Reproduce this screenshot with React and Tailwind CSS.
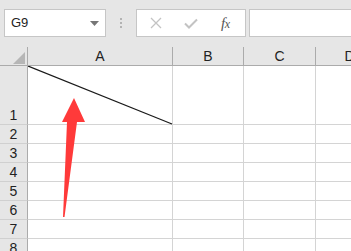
import React from 'react';

const cols = [
  { label: 'A', w: 'w-[145px]' },
  { label: 'B', w: 'w-[71px]' },
  { label: 'C', w: 'w-[72px]' },
  { label: 'D', w: 'w-[68px]' },
];

const rows = [
  { n: 1, h: 'h-[59px]' },
  { n: 2, h: 'h-[19px]' },
  { n: 3, h: 'h-[19px]' },
  { n: 4, h: 'h-[19px]' },
  { n: 5, h: 'h-[19px]' },
  { n: 6, h: 'h-[19px]' },
  { n: 7, h: 'h-[19px]' },
  { n: 8, h: 'h-[19px]' },
];

function FormulaBar() {
  return (
    <div className="flex items-center h-[47px] bg-[#e6e6e6] pb-[10px] pt-[9px]">
      {/* Name box */}
      <div className="ml-[4px] w-[102px] h-[28px] bg-white border border-[#c6c6c6] flex items-center justify-between pl-[6px] pr-[6px]">
        <span className="text-[13px] text-[#222]">G9</span>
        <svg width="9" height="5" viewBox="0 0 9 5">
          <path d="M0 0 L9 0 L4.5 5 Z" fill="#767676" />
        </svg>
      </div>
      {/* grip dots */}
      <div className="w-[30px] flex flex-col items-center gap-[2px]">
        <div className="w-[2px] h-[2px] bg-[#b3b3b3]" />
        <div className="w-[2px] h-[2px] bg-[#b3b3b3]" />
        <div className="w-[2px] h-[2px] bg-[#b3b3b3]" />
      </div>
      {/* buttons */}
      <div className="w-[110px] h-[28px] bg-white border border-[#c6c6c6] flex items-center">
        <svg width="12" height="12" viewBox="0 0 12 12" className="ml-[13px]">
          <path d="M1 1 L11 11 M11 1 L1 11" stroke="#c3c3c3" strokeWidth="1.3" />
        </svg>
        <svg width="14" height="11" viewBox="0 0 14 11" className="ml-[22px]">
          <path d="M1 5.5 L5 9.5 L13 1.5" stroke="#c3c3c3" strokeWidth="2" fill="none" />
        </svg>
        <span className="ml-[23px] text-[15px] italic text-[#555] font-['Liberation_Serif',serif] tracking-[-0.5px]">
          f<span className="text-[12px]">x</span>
        </span>
      </div>
      {/* formula input */}
      <div className="ml-[3px] flex-1 h-[28px] bg-white border border-[#c6c6c6] border-r-0" />
    </div>
  );
}

export default function App() {
  return (
    <div className="w-[351px] h-[251px] overflow-hidden bg-white font-['Liberation_Sans',Arial,sans-serif] relative">
      <FormulaBar />

      {/* column headers */}
      <div className="flex h-[19px] bg-[#e6e6e6] border-b border-[#ababab]">
        <div className="w-[28px] shrink-0 border-r border-[#ababab] relative">
          <svg width="12" height="12" viewBox="0 0 12 12" className="absolute left-[13px] top-[5px]">
            <path d="M12 0 L12 12 L0 12 Z" fill="#b6b6b6" />
          </svg>
        </div>
        {cols.map((c) => (
          <div
            key={c.label}
            className={`${c.w} shrink-0 border-r border-[#ababab] flex items-end justify-center text-[14px] leading-[18px] text-[#222]`}
          >
            <span>{c.label}</span>
          </div>
        ))}
      </div>

      {/* rows */}
      {rows.map((r) => (
        <div key={r.n} className={`flex ${r.h}`}>
          <div className="w-[28px] shrink-0 bg-[#e6e6e6] border-r border-b border-[#ababab] border-b-[#d0d0d0] flex items-end justify-center text-[14px] leading-[18px] text-[#222]">
            {r.n}
          </div>
          {cols.map((c, i) => (
            <div key={c.label} className={`${c.w} shrink-0 border-r border-b border-[#d4d4d4] relative`}>
              {r.n === 1 && i === 0 && (
                <svg className="absolute inset-0" width="145" height="59" viewBox="0 0 145 59">
                  <line x1="0" y1="0" x2="144" y2="58" stroke="#1a1a1a" strokeWidth="1.2" />
                </svg>
              )}
            </div>
          ))}
        </div>
      ))}

      {/* red arrow annotation */}
      <svg className="absolute left-0 top-0 pointer-events-none" width="351" height="251" viewBox="0 0 351 251">
        <path d="M74 98 L85 122 L77 122 L64.5 217 L63 217 L67 122 L62 122 Z" fill="#ff3a3a" />
      </svg>
    </div>
  );
}
